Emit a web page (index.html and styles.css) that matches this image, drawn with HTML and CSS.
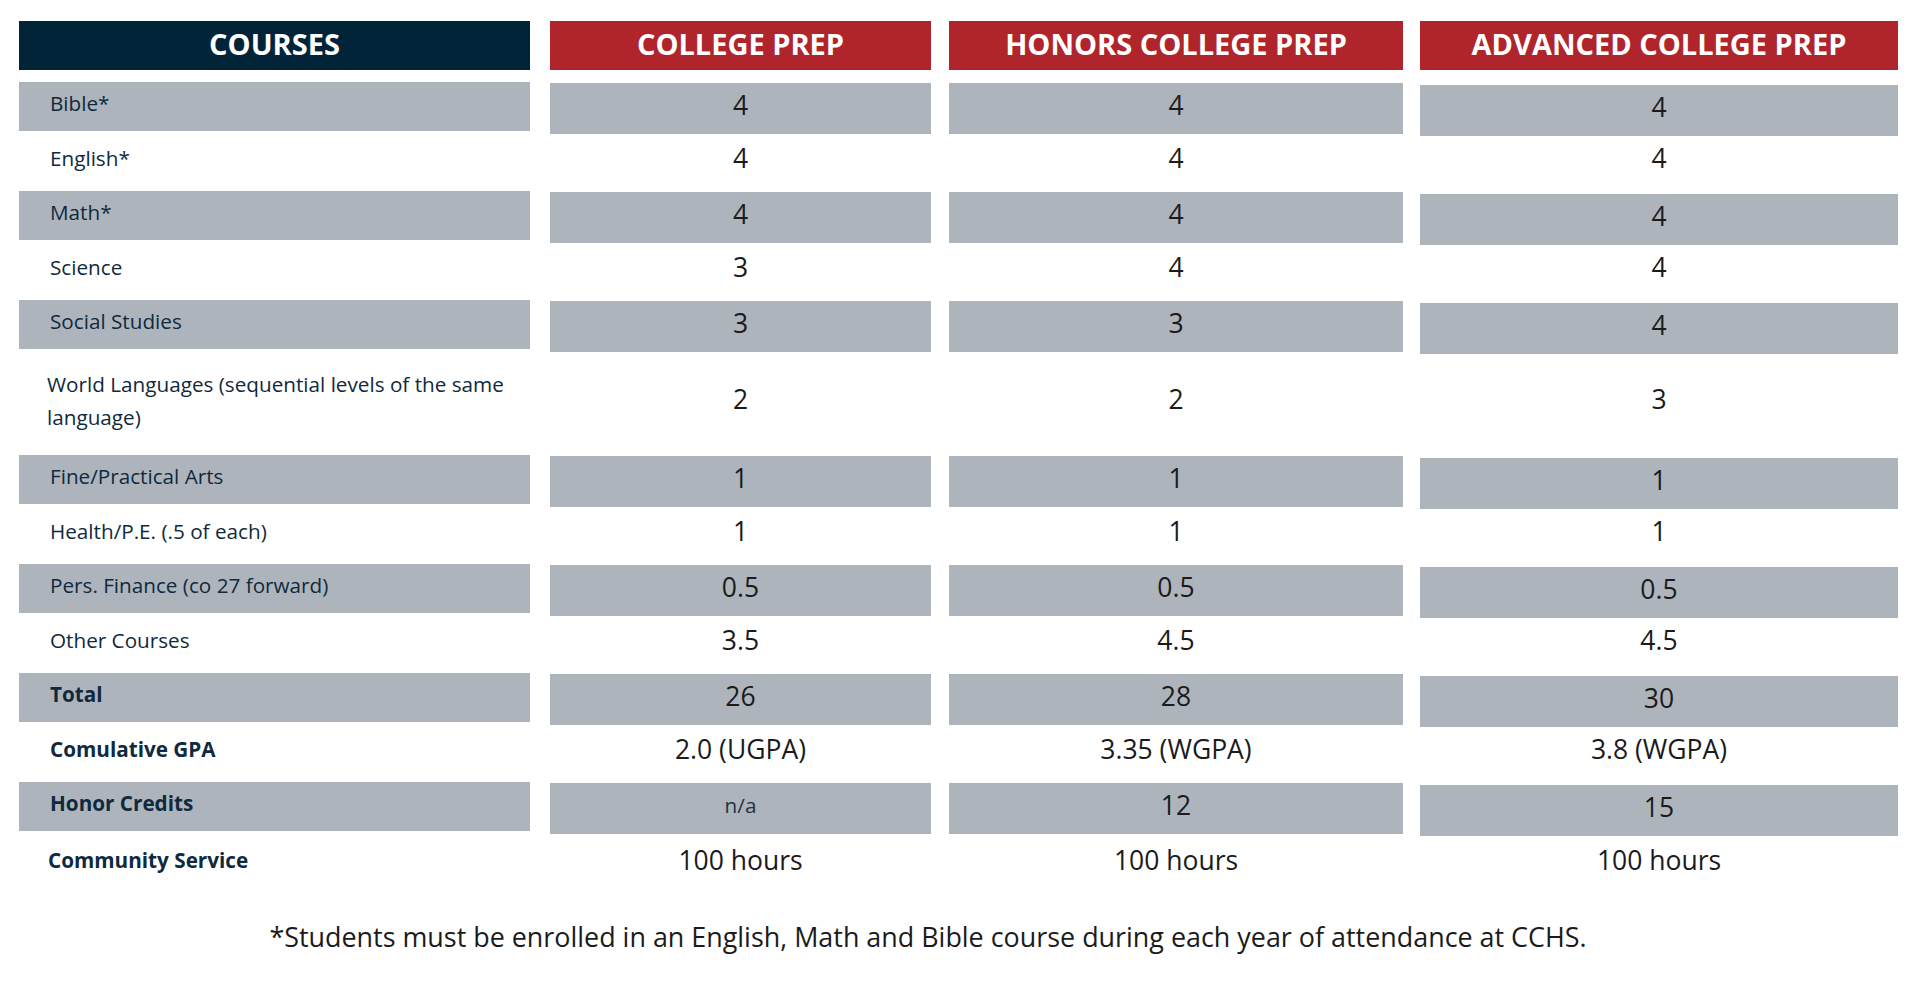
FILE: index.html
```html
<!DOCTYPE html>
<html lang="en">
<head>
<meta charset="utf-8">
<title>Graduation Requirements</title>
<link rel="stylesheet" href="styles.css">
</head>
<body>
<div class="table">
  <div class="c1 head navy">COURSES</div>
  <div class="c2 head red">COLLEGE PREP</div>
  <div class="c3 head red">HONORS COLLEGE PREP</div>
  <div class="c4 head red">ADVANCED COLLEGE PREP</div>

  <div class="c1 lab s">Bible*</div><div class="c2 num s">4</div><div class="c3 num s">4</div><div class="c4 num s">4</div>
  <div class="c1 lab">English*</div><div class="c2 num">4</div><div class="c3 num">4</div><div class="c4 num">4</div>
  <div class="c1 lab s">Math*</div><div class="c2 num s">4</div><div class="c3 num s">4</div><div class="c4 num s">4</div>
  <div class="c1 lab">Science</div><div class="c2 num">3</div><div class="c3 num">4</div><div class="c4 num">4</div>
  <div class="c1 lab s">Social Studies</div><div class="c2 num s">3</div><div class="c3 num s">3</div><div class="c4 num s">4</div>
  <div class="c1 lab wl">World Languages (sequential levels of the same language)</div><div class="c2 num">2</div><div class="c3 num">2</div><div class="c4 num">3</div>
  <div class="c1 lab s">Fine/Practical Arts</div><div class="c2 num s">1</div><div class="c3 num s">1</div><div class="c4 num s">1</div>
  <div class="c1 lab">Health/P.E. (.5 of each)</div><div class="c2 num">1</div><div class="c3 num">1</div><div class="c4 num">1</div>
  <div class="c1 lab s">Pers. Finance (co 27 forward)</div><div class="c2 num s">0.5</div><div class="c3 num s">0.5</div><div class="c4 num s">0.5</div>
  <div class="c1 lab">Other Courses</div><div class="c2 num">3.5</div><div class="c3 num">4.5</div><div class="c4 num">4.5</div>
  <div class="c1 lab b s">Total</div><div class="c2 num s">26</div><div class="c3 num s">28</div><div class="c4 num s">30</div>
  <div class="c1 lab b">Comulative GPA</div><div class="c2 num">2.0 (UGPA)</div><div class="c3 num">3.35 (WGPA)</div><div class="c4 num">3.8 (WGPA)</div>
  <div class="c1 lab b s">Honor Credits</div><div class="c2 num small s">n/a</div><div class="c3 num s">12</div><div class="c4 num s">15</div>
  <div class="c1 lab b cs">Community Service</div><div class="c2 num cs">100 hours</div><div class="c3 num cs">100 hours</div><div class="c4 num cs">100 hours</div>
</div>
<p class="note">*Students must be enrolled in an English, Math and Bible course during each year of attendance at CCHS.</p>
</body>
</html>
```
FILE: styles.css
```css
html, body {
  margin: 0;
  padding: 0;
  background: #ffffff;
}
body {
  font-family: "Open Sans", "Noto Sans", "Liberation Sans", sans-serif;
}
.table {
  display: grid;
  grid-template-columns: 511px 20px 381px 18px 454px 17px 478px;
  grid-template-rows: 61px 49px 60px 49px 60px 49px 106px 49px 60px 49px 60px 49px 60px 49px 60px;
  padding: 21px 0 0 19px;
}
.c1 { grid-column: 1; }
.c2 { grid-column: 3; }
.c3 { grid-column: 5; }
.c4 { grid-column: 7; }

.head {
  height: 49px;
  box-sizing: border-box;
  padding-bottom: 5px;
  display: flex;
  align-items: center;
  justify-content: center;
  color: #ffffff;
  font-weight: 700;
  font-size: 29px;
  align-self: start;
}
.navy { background: #012439; }
.red { background: #b0252b; }

.lab, .num {
  display: flex;
  align-items: center;
  align-self: start;
  height: 100%;
  box-sizing: border-box;
  padding-bottom: 7px;
}
.lab {
  padding-left: 31px;
  color: #0f2a3e;
  font-size: 20.7px;
}
.lab.b { font-weight: 700; }
.lab.cs { padding-left: 29px; }
.cs { padding-bottom: 2px; }
.lab.wl {
  padding-left: 28px;
  padding-right: 8px;
  line-height: 33px;
  padding-bottom: 2px;
}
.num {
  justify-content: center;
  color: #1b1b1b;
  font-size: 26.5px;
}
.num.small {
  font-size: 20.7px;
  color: #1d3347;
}
.s { background: #aeb4bc; }
.c1.s { height: 49px; }
.c2.s, .c3.s { height: 51px; margin-top: 1px; }
.c4.s { height: 51px; margin-top: 3px; }

.note {
  margin: 27px 0 0 0;
  padding-right: 64px;
  text-align: center;
  color: #1b1b1b;
  font-size: 26.9px;
}
```
